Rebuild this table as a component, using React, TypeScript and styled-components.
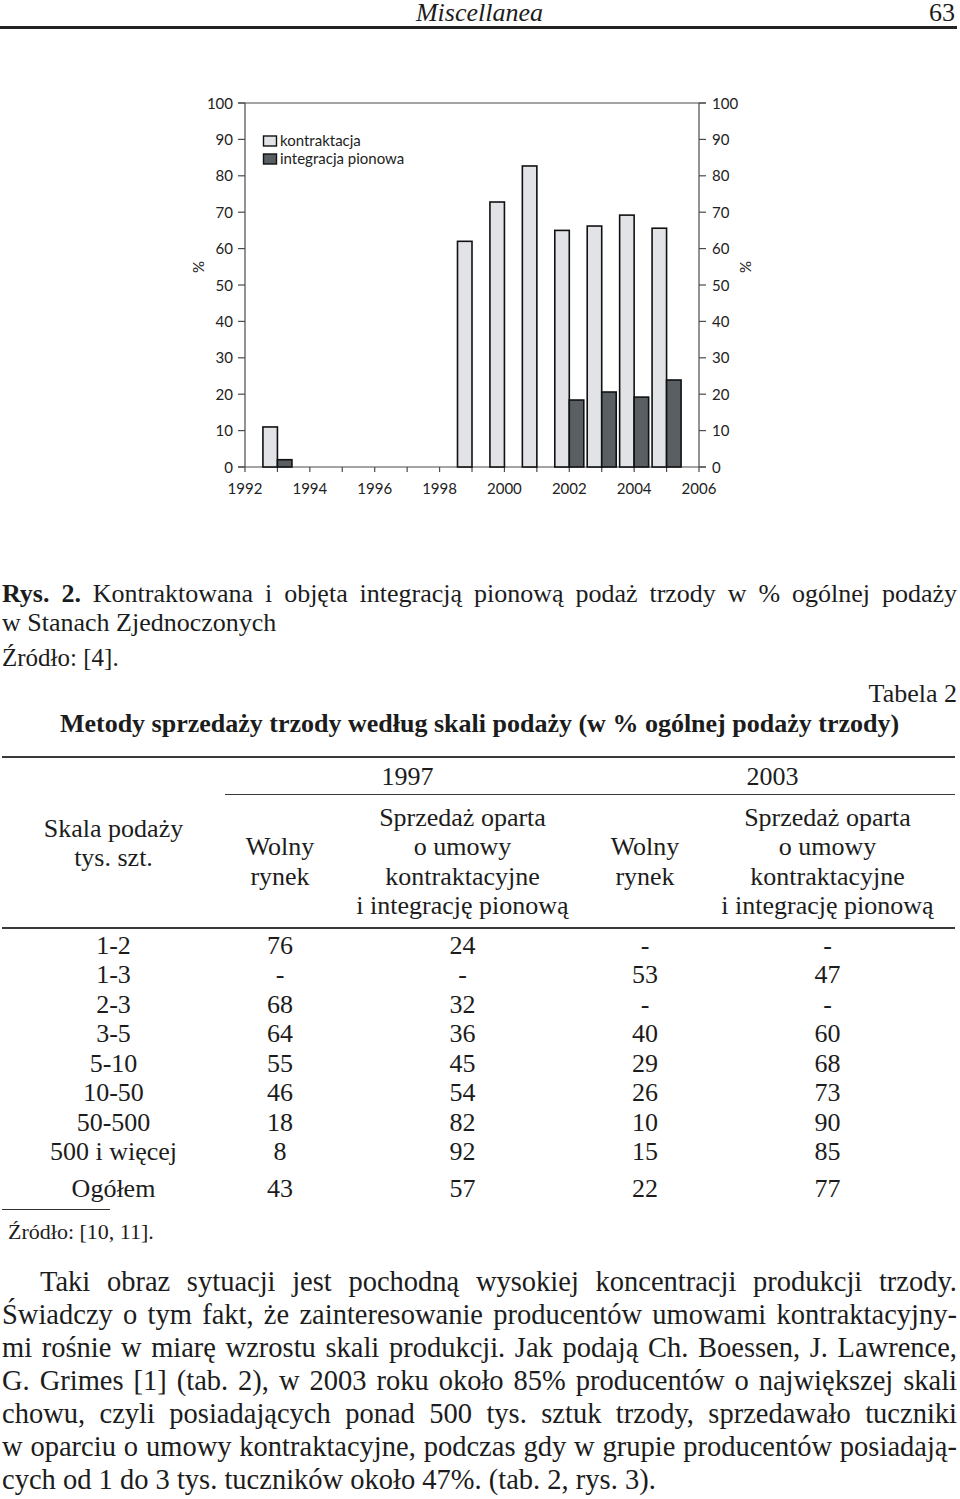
import React from "react";
import styled, { createGlobalStyle } from "styled-components";

const GlobalStyle = createGlobalStyle`
  html, body { margin: 0; padding: 0; background: #ffffff; }
  body {
    font-family: "Liberation Serif", "Times New Roman", serif;
    color: #1c1c1c;
    overflow-x: hidden;
  }
`;

const Page = styled.div`
  width: 960px;
  box-sizing: border-box;
  padding: 0 3px 0 2px;
`;

const RunningHead = styled.header`
  display: grid;
  grid-template-columns: 1fr auto 1fr;
  align-items: end;
  margin-left: -2px;
  padding-left: 2px;
  height: 26px;
  font-size: 26px;
  line-height: 26px;
  border-bottom: 3px solid #232323;
`;

const HeadTitle = styled.span`
  grid-column: 2;
  font-style: italic;
`;

const PageNo = styled.span`
  grid-column: 3;
  justify-self: end;
  padding-right: 2px;
`;

const ChartSvg = styled.svg`
  display: block;
  width: 955px;
  height: 520px;
  font-family: Lato, "Open Sans", sans-serif;
  font-size: 15px;
  fill: #222;
`;

const Caption = styled.div`
  margin-top: 30px;
  font-size: 26px;
  line-height: 29px;
`;

const Line = styled.span<{ $last?: boolean; $indent?: number }>`
  display: block;
  text-align: ${(p) => (p.$last ? "left" : "justify")};
  text-align-last: ${(p) => (p.$last ? "left" : "justify")};
  text-indent: ${(p) => p.$indent ?? 0}px;
`;

const Bold = styled.b`
  font-weight: 700;
`;

const Source = styled.div<{ $size: number; $lh: number; $mt: number; $indent?: number }>`
  margin-top: ${(p) => p.$mt}px;
  font-size: ${(p) => p.$size}px;
  line-height: ${(p) => p.$lh}px;
  padding-left: ${(p) => p.$indent ?? 0}px;
`;

const TableLabel = styled.div`
  margin-top: 7px;
  text-align: right;
  font-size: 26px;
  line-height: 30px;
`;

const TableTitle = styled.h2`
  margin: 0;
  text-align: center;
  font-size: 26px;
  line-height: 30px;
  font-weight: 700;
`;

const DataTable = styled.table`
  margin-top: 17px;
  width: 953px;
  table-layout: fixed;
  border-collapse: collapse;
  font-size: 26px;
  line-height: 29.5px;
  border-top: 2px solid #3a3a3a;
`;

const HeadCell = styled.th<{ $year?: boolean; $bottom?: boolean }>`
  font-weight: 400;
  text-align: center;
  vertical-align: middle;
  padding: ${(p) => (p.$year ? "4px 0 2px" : "8px 0 6px")};
  border-bottom: ${(p) =>
    p.$year ? "1.5px solid #3a3a3a" : p.$bottom ? "2px solid #3a3a3a" : "none"};
`;

const Cell = styled.td<{ $pad?: number }>`
  text-align: center;
  padding: ${(p) => p.$pad ?? 0}px 0 0;
`;

const FootRule = styled.div`
  margin-top: 6px;
  width: 108px;
  border-top: 1.5px solid #333;
`;

const Body = styled.div`
  margin-top: 20px;
  font-size: 28.5px;
  line-height: 33px;
`;

const years = [1992, 1993, 1994, 1995, 1996, 1997, 1998, 1999, 2000, 2001, 2002, 2003, 2004, 2005, 2006];
const X0 = 245;
const X1 = 699;
const YB = 468;
const YT = 104;
const step = (X1 - X0) / 14;
const yOf = (v: number) => YB - v * ((YB - YT) / 100);
const xOf = (yr: number) => X0 + (yr - 1992) * step;

type Bar = { tick: number; light: number; dark?: number };
const bars: Bar[] = [
  { tick: 1993, light: 11, dark: 2 },
  { tick: 1999, light: 62 },
  { tick: 2000, light: 72.8 },
  { tick: 2001, light: 82.7 },
  { tick: 2002, light: 65, dark: 18.4 },
  { tick: 2003, light: 66.2, dark: 20.6 },
  { tick: 2004, light: 69.2, dark: 19.2 },
  { tick: 2005, light: 65.6, dark: 23.9 },
];

const LIGHT = "#e2e3e6";
const DARK = "#5a5f63";
const AXIS = "#4a4a4a";

function Chart() {
  const ticks = [0, 10, 20, 30, 40, 50, 60, 70, 80, 90, 100];
  return (
    <ChartSvg viewBox="2 30 955 520" xmlns="http://www.w3.org/2000/svg">
      {/* frame */}
      <line x1={238} y1={YT} x2={706} y2={YT} stroke={AXIS} strokeWidth={1.2} />
      <line x1={X0} y1={YT} x2={X0} y2={YB} stroke={AXIS} strokeWidth={1.2} />
      <line x1={X1} y1={YT} x2={X1} y2={YB} stroke={AXIS} strokeWidth={1.2} />
      <line x1={238} y1={YB} x2={706} y2={YB} stroke={AXIS} strokeWidth={1.2} />
      {ticks.map((v) => (
        <g key={v}>
          <line x1={238} y1={yOf(v)} x2={X0} y2={yOf(v)} stroke={AXIS} strokeWidth={1.2} />
          <line x1={X1} y1={yOf(v)} x2={706} y2={yOf(v)} stroke={AXIS} strokeWidth={1.2} />
          <text x={233} y={yOf(v) + 5.5} textAnchor="end">
            {v}
          </text>
          <text x={712} y={yOf(v) + 5.5} textAnchor="start">
            {v}
          </text>
        </g>
      ))}
      {years.map((yr) => (
        <g key={yr}>
          <line x1={xOf(yr)} y1={YB} x2={xOf(yr)} y2={YB + 5} stroke={AXIS} strokeWidth={1.2} />
          {yr % 2 === 0 && (
            <text x={xOf(yr)} y={495} textAnchor="middle">
              {yr}
            </text>
          )}
        </g>
      ))}
      {bars.map((b) => {
        const t = xOf(b.tick);
        return (
          <g key={b.tick}>
            <rect
              x={t - 14.5}
              y={yOf(b.light)}
              width={14.5}
              height={YB - yOf(b.light)}
              fill={LIGHT}
              stroke="#111"
              strokeWidth={1.6}
            />
            {b.dark !== undefined && (
              <rect
                x={t}
                y={yOf(b.dark)}
                width={14.5}
                height={YB - yOf(b.dark)}
                fill={DARK}
                stroke="#111"
                strokeWidth={1.6}
              />
            )}
          </g>
        );
      })}
      {/* legend */}
      <rect x={263.5} y={137} width={13} height={10} fill={LIGHT} stroke="#111" strokeWidth={1.4} />
      <rect x={263.5} y={155} width={13} height={10} fill={DARK} stroke="#111" strokeWidth={1.4} />
      <text x={280} y={147}>kontraktacja</text>
      <text x={280} y={165}>integracja pionowa</text>
      {/* axis titles */}
      <text x={199} y={273} textAnchor="middle" transform="rotate(-90 199 268)">
        %
      </text>
      <text x={746} y={273} textAnchor="middle" transform="rotate(-90 746 268)">
        %
      </text>
    </ChartSvg>
  );
}

const rows: [string, string, string, string, string][] = [
  ["1-2", "76", "24", "-", "-"],
  ["1-3", "-", "-", "53", "47"],
  ["2-3", "68", "32", "-", "-"],
  ["3-5", "64", "36", "40", "60"],
  ["5-10", "55", "45", "29", "68"],
  ["10-50", "46", "54", "26", "73"],
  ["50-500", "18", "82", "10", "90"],
  ["500 i więcej", "8", "92", "15", "85"],
];

const total: [string, string, string, string, string] = ["Ogółem", "43", "57", "22", "77"];

const sales = (
  <>
    Sprzedaż oparta
    <br />o umowy
    <br />
    kontraktacyjne
    <br />i integrację pionową
  </>
);

const free = (
  <>
    Wolny
    <br />
    rynek
  </>
);

export default function App() {
  return (
    <>
      <GlobalStyle />
      <Page>
        <RunningHead>
          <HeadTitle>Miscellanea</HeadTitle>
          <PageNo>63</PageNo>
        </RunningHead>

        <Chart />

        <Caption>
          <Line>
            <Bold>Rys. 2.</Bold> Kontraktowana i objęta integracją pionową podaż trzody w % ogólnej podaży
          </Line>
          <Line $last>w Stanach Zjednoczonych</Line>
        </Caption>
        <Source $size={25} $lh={28} $mt={7}>
          Źródło: [4].
        </Source>

        <TableLabel>Tabela 2</TableLabel>
        <TableTitle>Metody sprzedaży trzody według skali podaży (w % ogólnej podaży trzody)</TableTitle>

        <DataTable>
          <colgroup>
            <col style={{ width: 223 }} />
            <col style={{ width: 110 }} />
            <col style={{ width: 255 }} />
            <col style={{ width: 110 }} />
            <col style={{ width: 255 }} />
          </colgroup>
          <thead>
            <tr>
              <HeadCell rowSpan={2} $bottom>
                Skala podaży
                <br />
                tys. szt.
              </HeadCell>
              <HeadCell colSpan={2} $year>
                1997
              </HeadCell>
              <HeadCell colSpan={2} $year>
                2003
              </HeadCell>
            </tr>
            <tr>
              <HeadCell $bottom>{free}</HeadCell>
              <HeadCell $bottom>{sales}</HeadCell>
              <HeadCell $bottom>{free}</HeadCell>
              <HeadCell $bottom>{sales}</HeadCell>
            </tr>
          </thead>
          <tbody>
            {rows.map((r, i) => (
              <tr key={r[0]}>
                {r.map((c, j) => (
                  <Cell key={j} $pad={i === 0 ? 2 : 0}>
                    {c}
                  </Cell>
                ))}
              </tr>
            ))}
            <tr>
              {total.map((c, j) => (
                <Cell key={j} $pad={7}>
                  {c}
                </Cell>
              ))}
            </tr>
          </tbody>
        </DataTable>
        <FootRule />
        <Source $size={22} $lh={26} $mt={9} $indent={6}>
          Źródło: [10, 11].
        </Source>

        <Body>
          <Line $indent={38}>
            Taki obraz sytuacji jest pochodną wysokiej koncentracji produkcji trzody.
          </Line>
          <Line>Świadczy o tym fakt, że zainteresowanie producentów umowami kontraktacyjny-</Line>
          <Line>mi rośnie w miarę wzrostu skali produkcji. Jak podają Ch. Boessen, J. Lawrence,</Line>
          <Line>G. Grimes [1] (tab. 2), w 2003 roku około 85% producentów o największej skali</Line>
          <Line>chowu, czyli posiadających ponad 500 tys. sztuk trzody, sprzedawało tuczniki</Line>
          <Line>w oparciu o umowy kontraktacyjne, podczas gdy w grupie producentów posiadają-</Line>
          <Line $last>cych od 1 do 3 tys. tuczników około 47%. (tab. 2, rys. 3).</Line>
        </Body>
      </Page>
    </>
  );
}
